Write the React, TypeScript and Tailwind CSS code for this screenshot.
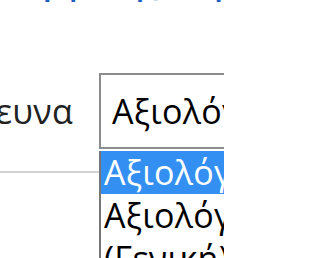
export default function App() {
  return (
    <div className="relative h-[258px] w-[224px] overflow-hidden bg-white font-['Open_Sans',sans-serif]">
      <h1 className="-mt-[35px] flex h-[34px] items-start whitespace-nowrap text-[32px] font-semibold leading-[34px] text-[#1f5fbf]">
        <span className="flex w-[160px] shrink-0 justify-end">Αξιολογητικής</span>
        <span className="ml-[18px]">στρατηγικής</span>
      </h1>

      <div className="mt-[74px] flex h-[76px] items-center">
        <div className="flex w-[73px] shrink-0 justify-end">
          <label className="whitespace-nowrap text-[34px] leading-none tracking-[0.3px] text-[#222]">Έρευνα</label>
        </div>
        <div className="ml-[26px] flex h-[76px] w-[160px] shrink-0 items-center border-2 border-[#8c8c8c] pl-[11px]">
          <span className="whitespace-nowrap text-[34px] leading-none tracking-[0.3px] text-black">Αξιολόγηση</span>
        </div>
      </div>

      <div className="mt-[22px] h-[2px] w-[100px] bg-[#d2d2d2]" />

      <ul className="absolute left-[99px] top-[151px] w-[160px] border-l-2 border-[#767676] bg-white text-[34px] leading-[43px] tracking-[0.3px]">
        <li className="whitespace-nowrap bg-[#3390f2] pl-[3px] text-white">Αξιολόγηση</li>
        <li className="whitespace-nowrap pl-[3px] text-black">Αξιολόγηση</li>
        <li className="whitespace-nowrap pl-[3px] text-black">(Γενική)</li>
      </ul>
    </div>
  );
}
